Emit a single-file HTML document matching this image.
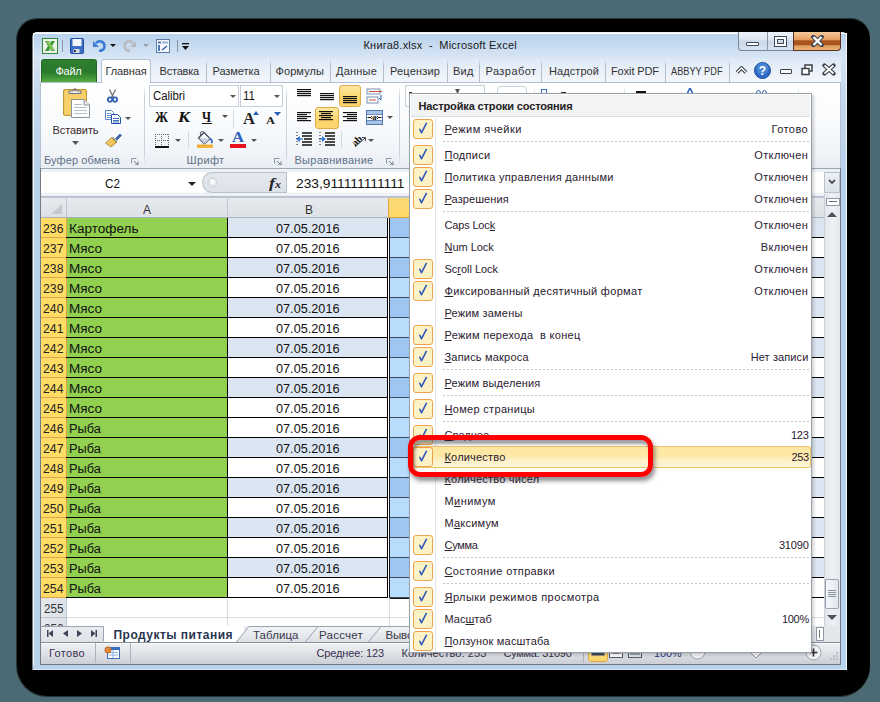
<!DOCTYPE html>
<html><head><meta charset="utf-8"><style>*{margin:0;padding:0;box-sizing:border-box}
html,body{width:880px;height:702px;overflow:hidden;background:#4c6a73;font-family:"Liberation Sans",sans-serif;position:relative}
div{position:absolute}
.t{white-space:pre}
u{text-decoration:underline;text-underline-offset:1px}
</style></head><body>
<div style="left:17px;top:19px;width:853px;height:677px;background:#000;border-radius:20px 19px 30px 30px"></div>
<div style="left:16px;top:18px;width:854px;height:679px;border:1px solid rgba(0,0,0,0.5);border-right:none;border-radius:21px 19px 30px 31px"></div>
<div style="left:32px;top:32px;width:815px;height:638px;background:linear-gradient(#dce7f4,#d6e3f2 26px,#c4d8ee 60px,#b9d2eb 140px,#b9d3ec);border-radius:5px 5px 0 0;border-left:1px solid #767a82;border-top:1px solid #e9eff7"></div>
<div style="left:33px;top:33px;width:1px;height:636px;background:#f3f7fc"></div>
<div style="left:846px;top:33px;width:1px;height:637px;background:#f3f7fc"></div>
<div style="left:34px;top:33px;width:812px;height:1px;background:#fff"></div>
<div style="left:33px;top:669px;width:813px;height:1px;background:#d6e6f6"></div>
<div style="left:34px;top:34px;width:812px;height:24px;background:linear-gradient(#b9d2ed,#c6daf0 45%,#d8e6f5)"></div>
<div style="left:40px;top:58px;width:801px;height:24px;background:linear-gradient(#dce8f5,#e9f0f9 50%,#f4f7fb)"></div>
<svg style="position:absolute;left:42px;top:38px;" width="16" height="16" viewBox="0 0 16 16"><rect x="0.5" y="0.5" width="15" height="15" fill="#eef3ea" stroke="#2f8a3a"/>
<path d="M3 3 L7 3 L8 6 L9 3 L13 3 L10 8 L13 13 L9 13 L8 10 L7 13 L3 13 L6 8 Z" fill="#3d9a3a"/>
<path d="M4 3.5 L7 3.5 L12.5 12.5 L9.5 12.5 Z" fill="#8ed05a" opacity=".8"/></svg>
<div style="left:62px;top:40px;width:1px;height:12px;background:#8a96a6"></div>
<svg style="position:absolute;left:70px;top:38px;" width="14" height="16" viewBox="0 0 14 16"><rect x="0.5" y="0.5" width="13" height="15" rx="1" fill="#3a6fc4" stroke="#1f4fa0"/>
<rect x="2.5" y="1" width="9" height="7" fill="#f4f6fa"/>
<rect x="3.5" y="11" width="6" height="4" fill="#d8dde6"/><rect x="4" y="12" width="2" height="2" fill="#333"/></svg>
<svg style="position:absolute;left:92px;top:39px;" width="14" height="13" viewBox="0 0 14 13"><path d="M4 4 C7 1 12 2 12.5 6.5 C13 10 10 12 7 12" fill="none" stroke="#3b7bd4" stroke-width="2.6"/>
<path d="M1 2 L1 8 L7 8 Z" fill="#3b7bd4"/></svg>
<svg style="position:absolute;left:110px;top:44px;" width="6" height="3" viewBox="0 0 6 3"><path d="M0 0 L6 0 L3 3 Z" fill="#111"/></svg>
<svg style="position:absolute;left:123px;top:39px;" width="14" height="13" viewBox="0 0 14 13"><path d="M10 4 C7 1 2 2 1.5 6.5 C1 10 4 12 7 12" fill="none" stroke="#b8bcc2" stroke-width="2.6"/>
<path d="M13 2 L13 8 L7 8 Z" fill="#b8bcc2"/></svg>
<svg style="position:absolute;left:143px;top:44px;" width="6" height="3" viewBox="0 0 6 3"><path d="M0 0 L6 0 L3 3 Z" fill="#9aa0a8"/></svg>
<svg style="position:absolute;left:156px;top:39px;" width="14" height="14" viewBox="0 0 14 14"><rect x="0.5" y="0.5" width="13" height="13" fill="#f6f9fd" stroke="#5a7aa8"/>
<rect x="2" y="2.5" width="3" height="2" fill="#4c78b8"/><rect x="6" y="2.5" width="6" height="2" fill="#9cb4d6"/>
<rect x="2" y="6" width="2" height="6" fill="#4c78b8"/><path d="M6 11 L11 7" stroke="#2a55a0" stroke-width="1.3"/></svg>
<div style="left:177px;top:40px;width:1px;height:12px;background:#8a96a6"></div>
<svg style="position:absolute;left:182px;top:43px;" width="7" height="7" viewBox="0 0 7 7"><rect x="0" y="0" width="7" height="1.3" fill="#111"/><path d="M0 3 L7 3 L3.5 7 Z" fill="#111"/></svg>
<div class="t" style="left:363.50px;top:39.00px;font-size:11px;line-height:normal;color:#1a1a1a;font-weight:normal;font-family:'Liberation Sans',sans-serif;letter-spacing:0.207px;">Книга8.xlsx  -  Microsoft Excel</div>
<div style="left:738px;top:32px;width:29px;height:19px;background:linear-gradient(#eef3f9,#dbe5f0 45%,#c9d6e6 50%,#d8e4f1);border:1px solid #7b8797;border-top:none;border-right:none;border-radius:0 0 0 4px"></div>
<div style="left:752px;top:42px;width:14px;height:1px;display:none"></div>
<div style="left:746px;top:42px;width:13px;height:4px;background:#fff;border:1px solid #3c4a5c;border-radius:1px"></div>
<div style="left:767px;top:32px;width:27px;height:19px;background:linear-gradient(#eef3f9,#dbe5f0 45%,#c9d6e6 50%,#d8e4f1);border-bottom:1px solid #7b8797;border-left:1px solid #8c98a8"></div>
<div style="left:775px;top:37px;width:11px;height:9px;border:2px solid #fff;outline:1px solid #3c4a5c;background:transparent"></div>
<div style="left:777px;top:39px;width:7px;height:5px;border:1px solid #3c4a5c"></div>
<div style="left:793px;top:32px;width:48px;height:19px;background:linear-gradient(#f3c89c,#eeb47e 22%,#e79c5c 45%,#a9541f 48%,#a9541f 70%,#dc9a58 76%,#ecb478);border:1px solid #5e3020;border-top:none;border-radius:0 0 4px 0"></div>
<svg style="position:absolute;left:811px;top:35px;" width="13" height="12" viewBox="0 0 13 12"><path d="M2.5 2 L10.5 10 M10.5 2 L2.5 10" stroke="#3d4350" stroke-width="4.4" stroke-linecap="square"/><path d="M2.5 2 L10.5 10 M10.5 2 L2.5 10" stroke="#fff" stroke-width="2.4"/></svg>
<div style="left:41px;top:59px;width:56px;height:23px;background:linear-gradient(#2f7d2f,#2a7a2c 55%,#3f9436 80%,#5aae44);border:1px solid #246a26;border-bottom:none;border-radius:3px 3px 0 0"></div>
<div class="t" style="left:55.50px;top:64.50px;font-size:11px;line-height:normal;color:#fff;font-weight:normal;font-family:'Liberation Sans',sans-serif;letter-spacing:-0.262px;">Файл</div>
<div style="left:101px;top:59px;width:50px;height:24px;background:linear-gradient(#fff,#fbfcfe);border:1px solid #b6c3d3;border-bottom:none;border-radius:3px 3px 0 0"></div>
<div class="t" style="left:105.50px;top:65.00px;font-size:11px;line-height:normal;color:#333;font-weight:normal;font-family:'Liberation Sans',sans-serif;letter-spacing:-0.125px;">Главная</div>
<div class="t" style="left:159.50px;top:65.00px;font-size:11px;line-height:normal;color:#333;font-weight:normal;font-family:'Liberation Sans',sans-serif;letter-spacing:-0.199px;">Вставка</div>
<div class="t" style="left:212.50px;top:65.00px;font-size:11px;line-height:normal;color:#333;font-weight:normal;font-family:'Liberation Sans',sans-serif;letter-spacing:-0.068px;">Разметка</div>
<div class="t" style="left:275.50px;top:65.00px;font-size:11px;line-height:normal;color:#333;font-weight:normal;font-family:'Liberation Sans',sans-serif;letter-spacing:0.089px;">Формулы</div>
<div class="t" style="left:336.00px;top:65.00px;font-size:11px;line-height:normal;color:#333;font-weight:normal;font-family:'Liberation Sans',sans-serif;letter-spacing:0.208px;">Данные</div>
<div class="t" style="left:390.00px;top:65.00px;font-size:11px;line-height:normal;color:#333;font-weight:normal;font-family:'Liberation Sans',sans-serif;letter-spacing:0.168px;">Рецензир</div>
<div class="t" style="left:453.00px;top:65.00px;font-size:11px;line-height:normal;color:#333;font-weight:normal;font-family:'Liberation Sans',sans-serif;letter-spacing:0.198px;">Вид</div>
<div class="t" style="left:485.50px;top:65.00px;font-size:11px;line-height:normal;color:#333;font-weight:normal;font-family:'Liberation Sans',sans-serif;letter-spacing:0.441px;">Разработ</div>
<div class="t" style="left:549.00px;top:65.00px;font-size:11px;line-height:normal;color:#333;font-weight:normal;font-family:'Liberation Sans',sans-serif;letter-spacing:0.074px;">Надстрой</div>
<div class="t" style="left:611.00px;top:65.00px;font-size:11px;line-height:normal;color:#333;font-weight:normal;font-family:'Liberation Sans',sans-serif;letter-spacing:-0.101px;">Foxit PDF</div>
<div class="t" style="left:671.00px;top:65.00px;font-size:11px;line-height:normal;color:#333;font-weight:normal;font-family:'Liberation Sans',sans-serif;transform:scaleX(0.8368);transform-origin:0 0;">ABBYY PDF</div>
<div style="left:205.5px;top:60px;width:1px;height:22px;background:linear-gradient(rgba(176,186,198,0.2),#b3bcc8 25%,#b3bcc8)"></div>
<div style="left:270px;top:60px;width:1px;height:22px;background:linear-gradient(rgba(176,186,198,0.2),#b3bcc8 25%,#b3bcc8)"></div>
<div style="left:330px;top:60px;width:1px;height:22px;background:linear-gradient(rgba(176,186,198,0.2),#b3bcc8 25%,#b3bcc8)"></div>
<div style="left:383px;top:60px;width:1px;height:22px;background:linear-gradient(rgba(176,186,198,0.2),#b3bcc8 25%,#b3bcc8)"></div>
<div style="left:446.5px;top:60px;width:1px;height:22px;background:linear-gradient(rgba(176,186,198,0.2),#b3bcc8 25%,#b3bcc8)"></div>
<div style="left:478.5px;top:60px;width:1px;height:22px;background:linear-gradient(rgba(176,186,198,0.2),#b3bcc8 25%,#b3bcc8)"></div>
<div style="left:541px;top:60px;width:1px;height:22px;background:linear-gradient(rgba(176,186,198,0.2),#b3bcc8 25%,#b3bcc8)"></div>
<div style="left:605px;top:60px;width:1px;height:22px;background:linear-gradient(rgba(176,186,198,0.2),#b3bcc8 25%,#b3bcc8)"></div>
<div style="left:664.5px;top:60px;width:1px;height:22px;background:linear-gradient(rgba(176,186,198,0.2),#b3bcc8 25%,#b3bcc8)"></div>
<div style="left:728.5px;top:60px;width:1px;height:22px;background:linear-gradient(rgba(176,186,198,0.2),#b3bcc8 25%,#b3bcc8)"></div>
<svg style="position:absolute;left:735px;top:65px;" width="13" height="10" viewBox="0 0 13 10"><path d="M2 7.5 L6.5 3 L11 7.5" fill="none" stroke="#3a3f48" stroke-width="3.6" stroke-linejoin="round"/><path d="M2 7.5 L6.5 3 L11 7.5" fill="none" stroke="#fff" stroke-width="1.4"/></svg>
<svg style="position:absolute;left:754px;top:62px;" width="17" height="17" viewBox="0 0 17 17"><circle cx="8.5" cy="8.5" r="8" fill="#2f6bc4" stroke="#1f4f9a"/><circle cx="8.5" cy="6.5" r="6" fill="#5a92de" opacity=".6"/><text x="8.5" y="13" font-family="Liberation Sans" font-weight="bold" font-size="12" fill="#fff" text-anchor="middle">?</text></svg>
<div style="left:780px;top:69px;width:12px;height:5px;background:#fff;border:1.5px solid #3a3f48;border-radius:1px"></div>
<svg style="position:absolute;left:801px;top:64px;" width="12" height="12" viewBox="0 0 12 12"><rect x="4" y="1" width="7" height="6" fill="#fff" stroke="#3a3f48" stroke-width="1.5"/><rect x="1" y="4.5" width="7" height="6" fill="#fff" stroke="#3a3f48" stroke-width="1.5"/></svg>
<svg style="position:absolute;left:822px;top:63px;" width="14" height="13" viewBox="0 0 14 13"><path d="M2.5 2.5 L11.5 10.5 M11.5 2.5 L2.5 10.5" stroke="#3a3f48" stroke-width="4.2" stroke-linecap="round"/><path d="M2.5 2.5 L11.5 10.5 M11.5 2.5 L2.5 10.5" stroke="#fff" stroke-width="1.8"/></svg>
<div style="left:40px;top:82px;width:801px;height:87px;background:linear-gradient(#ffffff,#f9fbfd 45%,#f1f4f8 80%,#e9eef4);border:1px solid #b6c3d3;border-top-color:#b0bfd1"></div>
<div style="left:102px;top:82px;width:48px;height:1px;background:#fff"></div>
<div style="left:144px;top:85px;width:1px;height:81px;background:linear-gradient(rgba(200,210,222,0),#c9d3df 15%,#c9d3df 85%,rgba(200,210,222,0))"></div>
<div style="left:286px;top:85px;width:1px;height:81px;background:linear-gradient(rgba(200,210,222,0),#c9d3df 15%,#c9d3df 85%,rgba(200,210,222,0))"></div>
<div style="left:399px;top:85px;width:1px;height:81px;background:linear-gradient(rgba(200,210,222,0),#c9d3df 15%,#c9d3df 85%,rgba(200,210,222,0))"></div>
<div style="left:534px;top:85px;width:1px;height:81px;background:linear-gradient(rgba(200,210,222,0),#c9d3df 15%,#c9d3df 85%,rgba(200,210,222,0))"></div>
<div style="left:624px;top:85px;width:1px;height:81px;background:linear-gradient(rgba(200,210,222,0),#c9d3df 15%,#c9d3df 85%,rgba(200,210,222,0))"></div>
<div style="left:798px;top:85px;width:1px;height:81px;background:linear-gradient(rgba(200,210,222,0),#c9d3df 15%,#c9d3df 85%,rgba(200,210,222,0))"></div>
<div class="t" style="left:44.00px;top:154.00px;font-size:11px;line-height:normal;color:#5f7088;font-weight:normal;font-family:'Liberation Sans',sans-serif;letter-spacing:0.104px;">Буфер обмена</div>
<div class="t" style="left:186.50px;top:154.00px;font-size:11px;line-height:normal;color:#5f7088;font-weight:normal;font-family:'Liberation Sans',sans-serif;letter-spacing:0.359px;">Шрифт</div>
<div class="t" style="left:294.50px;top:154.00px;font-size:11px;line-height:normal;color:#5f7088;font-weight:normal;font-family:'Liberation Sans',sans-serif;letter-spacing:0.273px;">Выравнивание</div>
<svg style="position:absolute;left:131px;top:158px;" width="8" height="7" viewBox="0 0 8 7"><path d="M0.5 0.5 H5.5 M0.5 0.5 V5.5" stroke="#8a96a6" fill="none"/><path d="M3 3 L7 7 M7 3.5 V7 H3.5" stroke="#6a7686" fill="none"/></svg>
<svg style="position:absolute;left:274px;top:158px;" width="8" height="7" viewBox="0 0 8 7"><path d="M0.5 0.5 H5.5 M0.5 0.5 V5.5" stroke="#8a96a6" fill="none"/><path d="M3 3 L7 7 M7 3.5 V7 H3.5" stroke="#6a7686" fill="none"/></svg>
<svg style="position:absolute;left:386px;top:158px;" width="8" height="7" viewBox="0 0 8 7"><path d="M0.5 0.5 H5.5 M0.5 0.5 V5.5" stroke="#8a96a6" fill="none"/><path d="M3 3 L7 7 M7 3.5 V7 H3.5" stroke="#6a7686" fill="none"/></svg>
<svg style="position:absolute;left:62px;top:87px;" width="29" height="32" viewBox="0 0 29 32"><rect x="1.5" y="2.5" width="23" height="26" rx="1.5" fill="#f5c95e" stroke="#b89a3a"/>
<rect x="3" y="4" width="20" height="23" fill="#f7d06a"/>
<path d="M7 6.5 H19 V4 H15 C15 1 11 1 11 4 H7 Z" fill="#e9ecef" stroke="#6f747a"/>
<circle cx="13" cy="3" r="0.9" fill="#a03020"/>
<path d="M9.5 12.5 H22 L27.5 18 V30.5 H9.5 Z" fill="#fff" stroke="#8a929c"/>
<path d="M22 12.5 V18 H27.5" fill="#e6e9ee" stroke="#8a929c"/>
<path d="M12 17.5 H20 M12 20.5 H25 M12 23.5 H25 M12 26.5 H25" stroke="#b8bec6"/></svg>
<div class="t" style="left:52.50px;top:123.70px;font-size:11px;line-height:normal;color:#3a2a2a;font-weight:normal;font-family:'Liberation Sans',sans-serif;letter-spacing:-0.080px;">Вставить</div>
<svg style="position:absolute;left:72px;top:141px;" width="7" height="4" viewBox="0 0 7 4"><path d="M0 0 H7 L3.5 4 Z" fill="#555"/></svg>
<svg style="position:absolute;left:107px;top:89px;" width="11" height="14" viewBox="0 0 11 14"><path d="M2.5 0.5 L6.5 8.5 M8.5 0.5 L4.5 8.5" stroke="#6a6f78" stroke-width="1.3"/><circle cx="3" cy="10.6" r="2.2" fill="none" stroke="#2a5cb5" stroke-width="1.7"/><circle cx="8" cy="10.6" r="2.2" fill="none" stroke="#2a5cb5" stroke-width="1.7"/></svg>
<svg style="position:absolute;left:104px;top:110px;" width="17" height="14" viewBox="0 0 17 14"><path d="M1.5 0.5 H7.5 L9.5 2.5 V9.5 H1.5 Z" fill="#fff" stroke="#5a86c8"/><path d="M3 3.5 H7 M3 5.5 H7 M3 7.5 H7" stroke="#6a98d8"/><path d="M7.5 4.5 H13.5 L16.5 7.5 V13.5 H7.5 Z" fill="#fff" stroke="#2453a8"/><path d="M9 8.5 H15 M9 10.5 H15 M9 12 H15" stroke="#3a6cc0"/></svg>
<svg style="position:absolute;left:125px;top:117px;" width="6" height="3" viewBox="0 0 6 3"><path d="M0 0 H6 L3 3 Z" fill="#555"/></svg>
<svg style="position:absolute;left:105px;top:132px;" width="17" height="15" viewBox="0 0 17 15"><path d="M10.5 6.5 L15 2 L16.5 3.5 L12 8 Z" fill="#3f6ab0" stroke="#2a4a80" stroke-width=".7"/><path d="M8 5 L12.5 9.5 L11 11 L6.5 6.5 Z" fill="#8c929a"/><path d="M0.5 11 L6.5 5.5 L11.5 10.5 L6 15 Z" fill="#ecc04e" stroke="#9b7a28" stroke-width=".7"/><path d="M2 11.5 L6.5 7.5 M4 13 L8 9.5" stroke="#f8e4a0" stroke-width=".8"/></svg>
<div style="left:149px;top:85px;width:90px;height:22px;background:#fff;border:1px solid #c5cfdc"></div>
<div style="left:240px;top:85px;width:43px;height:22px;background:#fff;border:1px solid #c5cfdc"></div>
<div class="t" style="left:152.50px;top:88.70px;font-size:12px;line-height:normal;color:#111;font-weight:normal;font-family:'Liberation Sans',sans-serif;transform:scaleX(0.9407);transform-origin:0 0;">Calibri</div>
<div class="t" style="left:242.50px;top:88.70px;font-size:12px;line-height:normal;color:#111;font-weight:normal;font-family:'Liberation Sans',sans-serif;transform:scaleX(0.9624);transform-origin:0 0;">11</div>
<svg style="position:absolute;left:230px;top:95px;" width="6" height="3" viewBox="0 0 6 3"><path d="M0 0 H6 L3 3 Z" fill="#555"/></svg>
<svg style="position:absolute;left:274px;top:95px;" width="6" height="3" viewBox="0 0 6 3"><path d="M0 0 H6 L3 3 Z" fill="#555"/></svg>
<div class="t" style="left:154.50px;top:110.00px;font-size:14px;line-height:normal;color:#111;font-weight:bold;font-family:'Liberation Serif',serif;transform:scaleX(0.9391);transform-origin:0 0;">Ж</div>
<div class="t" style="left:177.50px;top:110.00px;font-size:14px;line-height:normal;color:#111;font-weight:bold;font-family:'Liberation Serif',serif;font-style:italic;transform:scaleX(1.2632);transform-origin:0 0;">К</div>
<div class="t" style="left:202.00px;top:110.00px;font-size:14px;line-height:normal;color:#111;font-weight:bold;font-family:'Liberation Serif',serif;transform:scaleX(0.8754);transform-origin:0 0;">Ч</div>
<div style="left:202px;top:123px;width:10px;height:1px;background:#111"></div>
<svg style="position:absolute;left:222px;top:115px;" width="6" height="3" viewBox="0 0 6 3"><path d="M0 0 H6 L3 3 Z" fill="#555"/></svg>
<div style="left:233px;top:110px;width:1px;height:18px;background:#d3dae3"></div>
<div class="t" style="left:243.00px;top:109.00px;font-size:17px;line-height:normal;color:#222;font-weight:bold;font-family:'Liberation Serif',serif;transform:scaleX(0.9771);transform-origin:0 0;">A</div>
<svg style="position:absolute;left:253px;top:111px;" width="6" height="4" viewBox="0 0 6 4"><path d="M0 4 L3 0 L6 4 Z" fill="#2b5fb8"/></svg>
<div class="t" style="left:266.00px;top:114.00px;font-size:11px;line-height:normal;color:#222;font-weight:bold;font-family:'Liberation Serif',serif;transform:scaleX(1.1316);transform-origin:0 0;">A</div>
<svg style="position:absolute;left:274px;top:112px;" width="7" height="4" viewBox="0 0 7 4"><path d="M0 0 H7 L3.5 4 Z" fill="#2b5fb8"/></svg>
<svg style="position:absolute;left:155px;top:134px;" width="14" height="14" viewBox="0 0 14 14"><g fill="#666"><rect x="0" y="0" width="1" height="1"/><rect x="0" y="6" width="1" height="1"/><rect x="0" y="0" width="1" height="1"/><rect x="6" y="0" width="1" height="1"/><rect x="13" y="0" width="1" height="1"/><rect x="2" y="0" width="1" height="1"/><rect x="2" y="6" width="1" height="1"/><rect x="0" y="2" width="1" height="1"/><rect x="6" y="2" width="1" height="1"/><rect x="13" y="2" width="1" height="1"/><rect x="4" y="0" width="1" height="1"/><rect x="4" y="6" width="1" height="1"/><rect x="0" y="4" width="1" height="1"/><rect x="6" y="4" width="1" height="1"/><rect x="13" y="4" width="1" height="1"/><rect x="6" y="0" width="1" height="1"/><rect x="6" y="6" width="1" height="1"/><rect x="0" y="6" width="1" height="1"/><rect x="6" y="6" width="1" height="1"/><rect x="13" y="6" width="1" height="1"/><rect x="8" y="0" width="1" height="1"/><rect x="8" y="6" width="1" height="1"/><rect x="0" y="8" width="1" height="1"/><rect x="6" y="8" width="1" height="1"/><rect x="13" y="8" width="1" height="1"/><rect x="10" y="0" width="1" height="1"/><rect x="10" y="6" width="1" height="1"/><rect x="0" y="10" width="1" height="1"/><rect x="6" y="10" width="1" height="1"/><rect x="13" y="10" width="1" height="1"/><rect x="12" y="0" width="1" height="1"/><rect x="12" y="6" width="1" height="1"/><rect x="0" y="12" width="1" height="1"/><rect x="6" y="12" width="1" height="1"/><rect x="13" y="12" width="1" height="1"/></g><rect x="0" y="12" width="14" height="2" fill="#111"/></svg>
<svg style="position:absolute;left:175px;top:139px;" width="6" height="3" viewBox="0 0 6 3"><path d="M0 0 H6 L3 3 Z" fill="#555"/></svg>
<div style="left:188px;top:131px;width:1px;height:17px;background:#d3dae3"></div>
<svg style="position:absolute;left:196px;top:131px;" width="18" height="17" viewBox="0 0 18 17"><path d="M2.5 7 L8 1.5 L14 7.5 L8.5 13 Z" fill="#fdfdfd" stroke="#2f3a4c" stroke-width="1.1"/><path d="M3 7 L14 7.5 L8.5 13 Z" fill="#c9d3df"/><path d="M5 4.5 C3 1 6 -0.5 8 1.5" stroke="#2f3a4c" fill="none"/><path d="M14 7.5 C16.5 9.5 16.5 11 15.3 12" stroke="#3a6cc8" stroke-width="1.8" fill="none"/><rect x="1" y="13.5" width="16" height="3.5" fill="#f3b63c"/><path d="M1 14.5 H17" stroke="#e89a20" stroke-dasharray="1 1"/></svg>
<svg style="position:absolute;left:218px;top:139px;" width="6" height="3" viewBox="0 0 6 3"><path d="M0 0 H6 L3 3 Z" fill="#555"/></svg>
<div class="t" style="left:232.00px;top:129.00px;font-size:15px;line-height:normal;color:#2b5fb8;font-weight:bold;font-family:'Liberation Serif',serif;transform:scaleX(1.1066);transform-origin:0 0;">A</div>
<div style="left:230px;top:144px;width:16px;height:4px;background:#e8101c"></div>
<svg style="position:absolute;left:251px;top:139px;" width="6" height="3" viewBox="0 0 6 3"><path d="M0 0 H6 L3 3 Z" fill="#555"/></svg>
<svg style="position:absolute;left:297px;top:89px;" width="16" height="9" viewBox="0 0 16 9"><rect x="0" y="0" width="14" height="1.2" fill="#111"/><rect x="0" y="2" width="14" height="1.2" fill="#111"/><rect x="0" y="4" width="14" height="1.2" fill="#111"/><rect x="0" y="6" width="14" height="1.2" fill="#111"/></svg>
<svg style="position:absolute;left:320px;top:93px;" width="16" height="9" viewBox="0 0 16 9"><rect x="0" y="0" width="14" height="1.2" fill="#111"/><rect x="0" y="2" width="14" height="1.2" fill="#111"/><rect x="0" y="4" width="14" height="1.2" fill="#111"/><rect x="0" y="6" width="14" height="1.2" fill="#111"/></svg>
<div style="left:339px;top:85px;width:22px;height:22px;background:linear-gradient(#fde9a0,#fbd46a 60%,#fdd66f);border:1px solid #e2a947;border-radius:3px"></div>
<svg style="position:absolute;left:343px;top:96px;" width="16" height="9" viewBox="0 0 16 9"><rect x="0" y="0" width="14" height="1.2" fill="#111"/><rect x="0" y="2" width="14" height="1.2" fill="#111"/><rect x="0" y="4" width="14" height="1.2" fill="#111"/><rect x="0" y="6" width="14" height="1.2" fill="#111"/></svg>
<svg style="position:absolute;left:366px;top:88px;" width="17" height="16" viewBox="0 0 17 16"><rect x="1" y="1" width="13" height="5" fill="#fff" stroke="#7890b0"/><path d="M3 3.5 H16" stroke="#c05030"/><rect x="1" y="9" width="11" height="6" fill="#fff" stroke="#7890b0"/><path d="M3 12 H10" stroke="#c05030"/><path d="M15 7 V12 L13 10" stroke="#2b5fb8" fill="none"/></svg>
<svg style="position:absolute;left:297px;top:112px;" width="16" height="11" viewBox="0 0 16 11"><rect x="0" y="0" width="14" height="1.2" fill="#111"/><rect x="0" y="2" width="10" height="1.2" fill="#111"/><rect x="0" y="4" width="14" height="1.2" fill="#111"/><rect x="0" y="6" width="10" height="1.2" fill="#111"/><rect x="0" y="8" width="14" height="1.2" fill="#111"/></svg>
<div style="left:315px;top:107px;width:24px;height:22px;background:linear-gradient(#fde9a0,#fbd46a 60%,#fdd66f);border:1px solid #e2a947;border-radius:3px"></div>
<svg style="position:absolute;left:319px;top:111px;" width="16" height="11" viewBox="0 0 16 11"><rect x="0" y="0" width="14" height="1.2" fill="#111"/><rect x="2" y="2" width="10" height="1.2" fill="#111"/><rect x="0" y="4" width="14" height="1.2" fill="#111"/><rect x="2" y="6" width="10" height="1.2" fill="#111"/><rect x="0" y="8" width="14" height="1.2" fill="#111"/></svg>
<svg style="position:absolute;left:343px;top:112px;" width="16" height="11" viewBox="0 0 16 11"><rect x="0" y="0" width="14" height="1.2" fill="#111"/><rect x="4" y="2" width="10" height="1.2" fill="#111"/><rect x="0" y="4" width="14" height="1.2" fill="#111"/><rect x="4" y="6" width="10" height="1.2" fill="#111"/><rect x="0" y="8" width="14" height="1.2" fill="#111"/></svg>
<svg style="position:absolute;left:366px;top:110px;" width="17" height="15" viewBox="0 0 17 15"><rect x="0.5" y="0.5" width="16" height="14" fill="#a9c2e6" stroke="#4f78b0"/><rect x="1" y="4" width="15" height="7" fill="#fff"/><path d="M1 4.5 H16 M1 10.5 H16" stroke="#6a8cc0"/><text x="8.5" y="10" font-family="Liberation Serif" font-weight="bold" font-size="8" text-anchor="middle" fill="#111">a</text><path d="M1.5 7.5 H5 M12 7.5 H15.5" stroke="#111"/><path d="M5 6 L6.5 7.5 L5 9 M12 6 L10.5 7.5 L12 9" stroke="#111" fill="none" stroke-width=".8"/></svg>
<svg style="position:absolute;left:387px;top:116px;" width="6" height="3" viewBox="0 0 6 3"><path d="M0 0 H6 L3 3 Z" fill="#555"/></svg>
<svg style="position:absolute;left:295px;top:131px;" width="18" height="16" viewBox="0 0 18 16"><path d="M7 2 H17 M7 5 H17 M9 8 H17 M7 11 H17 M7 14 H17" stroke="#111" stroke-width="1.4"/><path d="M1 8 L5 5 V11 Z" fill="#3a7bd5"/><path d="M5 8 H8" stroke="#3a7bd5" stroke-width="1.4"/><path d="M2 1 V15" stroke="#111" stroke-dasharray="1 2"/></svg>
<svg style="position:absolute;left:318px;top:131px;" width="18" height="16" viewBox="0 0 18 16"><path d="M7 2 H17 M7 5 H17 M9 8 H17 M7 11 H17 M7 14 H17" stroke="#111" stroke-width="1.4"/><path d="M8 8 L4 5 V11 Z" fill="#3a7bd5"/><path d="M1 8 H5" stroke="#3a7bd5" stroke-width="1.4"/><path d="M2 1 V15" stroke="#111" stroke-dasharray="1 2"/></svg>
<div style="left:341px;top:131px;width:1px;height:17px;background:#d3dae3"></div>
<svg style="position:absolute;left:350px;top:132px;" width="18" height="16" viewBox="0 0 18 16"><g transform="rotate(-45 8 8)"><text x="1.5" y="11" font-family="Liberation Serif" font-weight="bold" font-size="10" fill="#111">ab</text></g><path d="M5 15 L15 6" stroke="#444" stroke-width="1"/><path d="M12 5.5 L15.5 5.5 L15.5 9" stroke="#444" fill="none"/></svg>
<svg style="position:absolute;left:368px;top:139px;" width="6" height="3" viewBox="0 0 6 3"><path d="M0 0 H6 L3 3 Z" fill="#555"/></svg>
<div style="left:405px;top:85px;width:80px;height:22px;background:#fff;border:1px solid #c5cfdc"></div>
<div style="left:409px;top:92px;width:3px;height:2px;background:#333"></div>
<div style="left:455px;top:89px;width:5px;height:4px;background:#555;clip-path:polygon(0 0,100% 0,60% 100%,40% 100%)"></div>
<div style="left:497px;top:86px;width:30px;height:12px;background:#fff;border:1px solid #c8d2de;border-radius:4px"></div>
<div style="left:541px;top:89px;width:6px;height:5px;background:#fff;border:1px solid #3a6fc4"></div>
<div style="left:561px;top:92px;width:5px;height:2px;background:#333"></div>
<div style="left:636px;top:91px;width:10px;height:2px;background:#111"></div>
<svg style="position:absolute;left:687px;top:88px;" width="6" height="6" viewBox="0 0 6 6"><path d="M0 6 L3 0 L6 6" stroke="#2b5fb8" stroke-width="1.5" fill="none"/></svg>
<svg style="position:absolute;left:756px;top:90px;" width="11" height="4" viewBox="0 0 11 4"><ellipse cx="2.5" cy="3" rx="2" ry="2.5" fill="none" stroke="#2b5fb8"/><ellipse cx="8.5" cy="3" rx="2" ry="2.5" fill="none" stroke="#2b5fb8"/></svg>
<div style="left:40px;top:169px;width:801px;height:29px;background:linear-gradient(#eef1f5,#e6eaf0)"></div>
<div style="left:40px;top:168px;width:801px;height:1px;background:#9aa8b8"></div>
<div style="left:41px;top:172px;width:165px;height:21px;background:#fff"></div>
<div class="t" style="left:105.00px;top:177.20px;font-size:12.5px;line-height:normal;color:#111;font-weight:normal;font-family:'Liberation Sans',sans-serif;transform:scaleX(0.9384);transform-origin:0 0;">C2</div>
<svg style="position:absolute;left:188px;top:182px;" width="8" height="4" viewBox="0 0 8 4"><path d="M0 0 H8 L4 4 Z" fill="#222"/></svg>
<div style="left:202px;top:172px;width:100px;height:21px;background:linear-gradient(#e4e8ee,#dde2e9);border:1px solid #b9c2cd;border-right:none;border-radius:11px 0 0 11px"></div>
<svg style="position:absolute;left:207px;top:177px;" width="11" height="11" viewBox="0 0 11 11"><circle cx="5.5" cy="5.5" r="4.5" fill="#e6e9ed" stroke="#c8cdd4"/><circle cx="5.5" cy="4.5" r="2.5" fill="#fff" opacity=".7"/></svg>
<div class="t" style="left:268.50px;top:175.50px;font-size:14px;line-height:normal;color:#222;font-weight:bold;font-family:'Liberation Serif',serif;font-style:italic;transform:scaleX(1.2843);transform-origin:0 0;">f</div>
<div class="t" style="left:274.50px;top:178.50px;font-size:10px;line-height:normal;color:#222;font-weight:bold;font-family:'Liberation Serif',serif;font-style:italic;transform:scaleX(1.2000);transform-origin:0 0;">x</div>
<div style="left:286px;top:172px;width:538px;height:21px;background:#fff;border-left:1px solid #b9c2cd"></div>
<div class="t" style="left:295.50px;top:177.20px;font-size:12.5px;line-height:normal;color:#111;font-weight:normal;font-family:'Liberation Sans',sans-serif;transform:scaleX(1.1017);transform-origin:0 0;">233,911111111111</div>
<div style="left:824px;top:172px;width:16px;height:21px;background:linear-gradient(#eef1f5,#dde3ea);border:1px solid #b9c2cd"></div>
<svg style="position:absolute;left:828px;top:179px;" width="8" height="6" viewBox="0 0 8 6"><path d="M1 1 L4 4 L7 1" stroke="#4a5260" stroke-width="1.8" fill="none"/></svg>
<div style="left:40px;top:194px;width:801px;height:1px;background:#f7f9fb"></div>
<div style="left:40px;top:196px;width:801px;height:2px;background:#bcc6d2"></div>
<div style="left:41px;top:198px;width:783px;height:428px;background:#fff"></div>
<div style="left:41px;top:198px;width:783px;height:19px;background:linear-gradient(#e7eaee,#dde1e6)"></div>
<div style="left:41px;top:217px;width:783px;height:1px;background:#a9b3c0"></div>
<svg style="position:absolute;left:51px;top:204px;" width="11" height="10" viewBox="0 0 11 10"><path d="M11 0 V10 H0 Z" fill="#c4c9d0"/></svg>
<div style="left:66px;top:198px;width:1px;height:19px;background:#c0c6ce"></div>
<div style="left:227px;top:198px;width:1px;height:19px;background:#c0c6ce"></div>
<div class="t" style="left:143.00px;top:203.00px;font-size:12.5px;line-height:normal;color:#333;font-weight:normal;font-family:'Liberation Sans',sans-serif;transform:scaleX(0.9588);transform-origin:0 0;">A</div>
<div class="t" style="left:304.50px;top:203.00px;font-size:12.5px;line-height:normal;color:#333;font-weight:normal;font-family:'Liberation Sans',sans-serif;transform:scaleX(0.9588);transform-origin:0 0;">B</div>
<div style="left:388px;top:198px;width:22px;height:19px;background:linear-gradient(#fbd978,#ffda68);border-left:1px solid #e3a548"></div>
<div style="left:388px;top:217px;width:22px;height:1px;background:#e0a040"></div>
<div style="left:41px;top:218px;width:25px;height:379px;background:#ffdc64"></div>
<div style="left:66px;top:218px;width:1px;height:379px;background:#e0a548"></div>
<div style="left:41px;top:597px;width:25px;height:29px;background:linear-gradient(90deg,#e4e8ed,#dde2e8)"></div>
<div style="left:66px;top:597px;width:1px;height:29px;background:#c0c6ce"></div>
<div style="left:228px;top:218px;width:160px;height:19px;background:#dce6f2"></div>
<div style="left:390px;top:218px;width:20px;height:19px;background:#9dc6f1"></div>
<div style="left:811px;top:218px;width:13px;height:19px;background:#dce6f2"></div>
<div style="left:41px;top:237px;width:25px;height:1px;background:#e0a548"></div>
<div style="left:66px;top:237px;width:322px;height:1px;background:#000"></div>
<div style="left:811px;top:237px;width:13px;height:1px;background:#000"></div>
<div style="left:389px;top:237px;width:21px;height:1px;background:#3c4a60"></div>
<div class="t" style="left:43.00px;top:221.50px;font-size:12.5px;line-height:normal;color:#222;font-weight:normal;font-family:'Liberation Sans',sans-serif;transform:scaleX(0.9828);transform-origin:0 0;">236</div>
<div class="t" style="left:276.25px;top:221.50px;font-size:12.5px;line-height:normal;color:#111;font-weight:normal;font-family:'Liberation Sans',sans-serif;transform:scaleX(1.0150);transform-origin:0 0;">07.05.2016</div>
<div style="left:228px;top:238px;width:160px;height:19px;background:#fff"></div>
<div style="left:390px;top:238px;width:20px;height:19px;background:#b8dcfb"></div>
<div style="left:811px;top:238px;width:13px;height:19px;background:#fff"></div>
<div style="left:41px;top:257px;width:25px;height:1px;background:#e0a548"></div>
<div style="left:66px;top:257px;width:322px;height:1px;background:#000"></div>
<div style="left:811px;top:257px;width:13px;height:1px;background:#000"></div>
<div style="left:389px;top:257px;width:21px;height:1px;background:#3c4a60"></div>
<div class="t" style="left:43.00px;top:241.50px;font-size:12.5px;line-height:normal;color:#222;font-weight:normal;font-family:'Liberation Sans',sans-serif;transform:scaleX(0.9828);transform-origin:0 0;">237</div>
<div class="t" style="left:276.25px;top:241.50px;font-size:12.5px;line-height:normal;color:#111;font-weight:normal;font-family:'Liberation Sans',sans-serif;transform:scaleX(1.0150);transform-origin:0 0;">07.05.2016</div>
<div style="left:228px;top:258px;width:160px;height:19px;background:#dce6f2"></div>
<div style="left:390px;top:258px;width:20px;height:19px;background:#9dc6f1"></div>
<div style="left:811px;top:258px;width:13px;height:19px;background:#dce6f2"></div>
<div style="left:41px;top:277px;width:25px;height:1px;background:#e0a548"></div>
<div style="left:66px;top:277px;width:322px;height:1px;background:#000"></div>
<div style="left:811px;top:277px;width:13px;height:1px;background:#000"></div>
<div style="left:389px;top:277px;width:21px;height:1px;background:#3c4a60"></div>
<div class="t" style="left:43.00px;top:261.50px;font-size:12.5px;line-height:normal;color:#222;font-weight:normal;font-family:'Liberation Sans',sans-serif;transform:scaleX(0.9828);transform-origin:0 0;">238</div>
<div class="t" style="left:276.25px;top:261.50px;font-size:12.5px;line-height:normal;color:#111;font-weight:normal;font-family:'Liberation Sans',sans-serif;transform:scaleX(1.0150);transform-origin:0 0;">07.05.2016</div>
<div style="left:228px;top:278px;width:160px;height:19px;background:#fff"></div>
<div style="left:390px;top:278px;width:20px;height:19px;background:#b8dcfb"></div>
<div style="left:811px;top:278px;width:13px;height:19px;background:#fff"></div>
<div style="left:41px;top:297px;width:25px;height:1px;background:#e0a548"></div>
<div style="left:66px;top:297px;width:322px;height:1px;background:#000"></div>
<div style="left:811px;top:297px;width:13px;height:1px;background:#000"></div>
<div style="left:389px;top:297px;width:21px;height:1px;background:#3c4a60"></div>
<div class="t" style="left:43.00px;top:281.50px;font-size:12.5px;line-height:normal;color:#222;font-weight:normal;font-family:'Liberation Sans',sans-serif;transform:scaleX(0.9828);transform-origin:0 0;">239</div>
<div class="t" style="left:276.25px;top:281.50px;font-size:12.5px;line-height:normal;color:#111;font-weight:normal;font-family:'Liberation Sans',sans-serif;transform:scaleX(1.0150);transform-origin:0 0;">07.05.2016</div>
<div style="left:228px;top:298px;width:160px;height:19px;background:#dce6f2"></div>
<div style="left:390px;top:298px;width:20px;height:19px;background:#9dc6f1"></div>
<div style="left:811px;top:298px;width:13px;height:19px;background:#dce6f2"></div>
<div style="left:41px;top:317px;width:25px;height:1px;background:#e0a548"></div>
<div style="left:66px;top:317px;width:322px;height:1px;background:#000"></div>
<div style="left:811px;top:317px;width:13px;height:1px;background:#000"></div>
<div style="left:389px;top:317px;width:21px;height:1px;background:#3c4a60"></div>
<div class="t" style="left:43.00px;top:301.50px;font-size:12.5px;line-height:normal;color:#222;font-weight:normal;font-family:'Liberation Sans',sans-serif;transform:scaleX(0.9828);transform-origin:0 0;">240</div>
<div class="t" style="left:276.25px;top:301.50px;font-size:12.5px;line-height:normal;color:#111;font-weight:normal;font-family:'Liberation Sans',sans-serif;transform:scaleX(1.0150);transform-origin:0 0;">07.05.2016</div>
<div style="left:228px;top:318px;width:160px;height:19px;background:#fff"></div>
<div style="left:390px;top:318px;width:20px;height:19px;background:#b8dcfb"></div>
<div style="left:811px;top:318px;width:13px;height:19px;background:#fff"></div>
<div style="left:41px;top:337px;width:25px;height:1px;background:#e0a548"></div>
<div style="left:66px;top:337px;width:322px;height:1px;background:#000"></div>
<div style="left:811px;top:337px;width:13px;height:1px;background:#000"></div>
<div style="left:389px;top:337px;width:21px;height:1px;background:#3c4a60"></div>
<div class="t" style="left:43.00px;top:321.50px;font-size:12.5px;line-height:normal;color:#222;font-weight:normal;font-family:'Liberation Sans',sans-serif;transform:scaleX(0.9828);transform-origin:0 0;">241</div>
<div class="t" style="left:276.25px;top:321.50px;font-size:12.5px;line-height:normal;color:#111;font-weight:normal;font-family:'Liberation Sans',sans-serif;transform:scaleX(1.0150);transform-origin:0 0;">07.05.2016</div>
<div style="left:228px;top:338px;width:160px;height:19px;background:#dce6f2"></div>
<div style="left:390px;top:338px;width:20px;height:19px;background:#9dc6f1"></div>
<div style="left:811px;top:338px;width:13px;height:19px;background:#dce6f2"></div>
<div style="left:41px;top:357px;width:25px;height:1px;background:#e0a548"></div>
<div style="left:66px;top:357px;width:322px;height:1px;background:#000"></div>
<div style="left:811px;top:357px;width:13px;height:1px;background:#000"></div>
<div style="left:389px;top:357px;width:21px;height:1px;background:#3c4a60"></div>
<div class="t" style="left:43.00px;top:341.50px;font-size:12.5px;line-height:normal;color:#222;font-weight:normal;font-family:'Liberation Sans',sans-serif;transform:scaleX(0.9828);transform-origin:0 0;">242</div>
<div class="t" style="left:276.25px;top:341.50px;font-size:12.5px;line-height:normal;color:#111;font-weight:normal;font-family:'Liberation Sans',sans-serif;transform:scaleX(1.0150);transform-origin:0 0;">07.05.2016</div>
<div style="left:228px;top:358px;width:160px;height:19px;background:#fff"></div>
<div style="left:390px;top:358px;width:20px;height:19px;background:#b8dcfb"></div>
<div style="left:811px;top:358px;width:13px;height:19px;background:#fff"></div>
<div style="left:41px;top:377px;width:25px;height:1px;background:#e0a548"></div>
<div style="left:66px;top:377px;width:322px;height:1px;background:#000"></div>
<div style="left:811px;top:377px;width:13px;height:1px;background:#000"></div>
<div style="left:389px;top:377px;width:21px;height:1px;background:#3c4a60"></div>
<div class="t" style="left:43.00px;top:361.50px;font-size:12.5px;line-height:normal;color:#222;font-weight:normal;font-family:'Liberation Sans',sans-serif;transform:scaleX(0.9828);transform-origin:0 0;">243</div>
<div class="t" style="left:276.25px;top:361.50px;font-size:12.5px;line-height:normal;color:#111;font-weight:normal;font-family:'Liberation Sans',sans-serif;transform:scaleX(1.0150);transform-origin:0 0;">07.05.2016</div>
<div style="left:228px;top:378px;width:160px;height:19px;background:#dce6f2"></div>
<div style="left:390px;top:378px;width:20px;height:19px;background:#9dc6f1"></div>
<div style="left:811px;top:378px;width:13px;height:19px;background:#dce6f2"></div>
<div style="left:41px;top:397px;width:25px;height:1px;background:#e0a548"></div>
<div style="left:66px;top:397px;width:322px;height:1px;background:#000"></div>
<div style="left:811px;top:397px;width:13px;height:1px;background:#000"></div>
<div style="left:389px;top:397px;width:21px;height:1px;background:#3c4a60"></div>
<div class="t" style="left:43.00px;top:381.50px;font-size:12.5px;line-height:normal;color:#222;font-weight:normal;font-family:'Liberation Sans',sans-serif;transform:scaleX(0.9828);transform-origin:0 0;">244</div>
<div class="t" style="left:276.25px;top:381.50px;font-size:12.5px;line-height:normal;color:#111;font-weight:normal;font-family:'Liberation Sans',sans-serif;transform:scaleX(1.0150);transform-origin:0 0;">07.05.2016</div>
<div style="left:228px;top:398px;width:160px;height:19px;background:#fff"></div>
<div style="left:390px;top:398px;width:20px;height:19px;background:#b8dcfb"></div>
<div style="left:811px;top:398px;width:13px;height:19px;background:#fff"></div>
<div style="left:41px;top:417px;width:25px;height:1px;background:#e0a548"></div>
<div style="left:66px;top:417px;width:322px;height:1px;background:#000"></div>
<div style="left:811px;top:417px;width:13px;height:1px;background:#000"></div>
<div style="left:389px;top:417px;width:21px;height:1px;background:#3c4a60"></div>
<div class="t" style="left:43.00px;top:401.50px;font-size:12.5px;line-height:normal;color:#222;font-weight:normal;font-family:'Liberation Sans',sans-serif;transform:scaleX(0.9828);transform-origin:0 0;">245</div>
<div class="t" style="left:276.25px;top:401.50px;font-size:12.5px;line-height:normal;color:#111;font-weight:normal;font-family:'Liberation Sans',sans-serif;transform:scaleX(1.0150);transform-origin:0 0;">07.05.2016</div>
<div style="left:228px;top:418px;width:160px;height:19px;background:#fff"></div>
<div style="left:390px;top:418px;width:20px;height:19px;background:#b8dcfb"></div>
<div style="left:811px;top:418px;width:13px;height:19px;background:#fff"></div>
<div style="left:41px;top:437px;width:25px;height:1px;background:#e0a548"></div>
<div style="left:66px;top:437px;width:322px;height:1px;background:#000"></div>
<div style="left:811px;top:437px;width:13px;height:1px;background:#000"></div>
<div style="left:389px;top:437px;width:21px;height:1px;background:#3c4a60"></div>
<div class="t" style="left:43.00px;top:421.50px;font-size:12.5px;line-height:normal;color:#222;font-weight:normal;font-family:'Liberation Sans',sans-serif;transform:scaleX(0.9828);transform-origin:0 0;">246</div>
<div class="t" style="left:276.25px;top:421.50px;font-size:12.5px;line-height:normal;color:#111;font-weight:normal;font-family:'Liberation Sans',sans-serif;transform:scaleX(1.0150);transform-origin:0 0;">07.05.2016</div>
<div style="left:228px;top:438px;width:160px;height:19px;background:#dce6f2"></div>
<div style="left:390px;top:438px;width:20px;height:19px;background:#9dc6f1"></div>
<div style="left:811px;top:438px;width:13px;height:19px;background:#dce6f2"></div>
<div style="left:41px;top:457px;width:25px;height:1px;background:#e0a548"></div>
<div style="left:66px;top:457px;width:322px;height:1px;background:#000"></div>
<div style="left:811px;top:457px;width:13px;height:1px;background:#000"></div>
<div style="left:389px;top:457px;width:21px;height:1px;background:#3c4a60"></div>
<div class="t" style="left:43.00px;top:441.50px;font-size:12.5px;line-height:normal;color:#222;font-weight:normal;font-family:'Liberation Sans',sans-serif;transform:scaleX(0.9828);transform-origin:0 0;">247</div>
<div class="t" style="left:276.25px;top:441.50px;font-size:12.5px;line-height:normal;color:#111;font-weight:normal;font-family:'Liberation Sans',sans-serif;transform:scaleX(1.0150);transform-origin:0 0;">07.05.2016</div>
<div style="left:228px;top:458px;width:160px;height:19px;background:#fff"></div>
<div style="left:390px;top:458px;width:20px;height:19px;background:#b8dcfb"></div>
<div style="left:811px;top:458px;width:13px;height:19px;background:#fff"></div>
<div style="left:41px;top:477px;width:25px;height:1px;background:#e0a548"></div>
<div style="left:66px;top:477px;width:322px;height:1px;background:#000"></div>
<div style="left:811px;top:477px;width:13px;height:1px;background:#000"></div>
<div style="left:389px;top:477px;width:21px;height:1px;background:#3c4a60"></div>
<div class="t" style="left:43.00px;top:461.50px;font-size:12.5px;line-height:normal;color:#222;font-weight:normal;font-family:'Liberation Sans',sans-serif;transform:scaleX(0.9828);transform-origin:0 0;">248</div>
<div class="t" style="left:276.25px;top:461.50px;font-size:12.5px;line-height:normal;color:#111;font-weight:normal;font-family:'Liberation Sans',sans-serif;transform:scaleX(1.0150);transform-origin:0 0;">07.05.2016</div>
<div style="left:228px;top:478px;width:160px;height:19px;background:#dce6f2"></div>
<div style="left:390px;top:478px;width:20px;height:19px;background:#9dc6f1"></div>
<div style="left:811px;top:478px;width:13px;height:19px;background:#dce6f2"></div>
<div style="left:41px;top:497px;width:25px;height:1px;background:#e0a548"></div>
<div style="left:66px;top:497px;width:322px;height:1px;background:#000"></div>
<div style="left:811px;top:497px;width:13px;height:1px;background:#000"></div>
<div style="left:389px;top:497px;width:21px;height:1px;background:#3c4a60"></div>
<div class="t" style="left:43.00px;top:481.50px;font-size:12.5px;line-height:normal;color:#222;font-weight:normal;font-family:'Liberation Sans',sans-serif;transform:scaleX(0.9828);transform-origin:0 0;">249</div>
<div class="t" style="left:276.25px;top:481.50px;font-size:12.5px;line-height:normal;color:#111;font-weight:normal;font-family:'Liberation Sans',sans-serif;transform:scaleX(1.0150);transform-origin:0 0;">07.05.2016</div>
<div style="left:228px;top:498px;width:160px;height:19px;background:#fff"></div>
<div style="left:390px;top:498px;width:20px;height:19px;background:#b8dcfb"></div>
<div style="left:811px;top:498px;width:13px;height:19px;background:#fff"></div>
<div style="left:41px;top:517px;width:25px;height:1px;background:#e0a548"></div>
<div style="left:66px;top:517px;width:322px;height:1px;background:#000"></div>
<div style="left:811px;top:517px;width:13px;height:1px;background:#000"></div>
<div style="left:389px;top:517px;width:21px;height:1px;background:#3c4a60"></div>
<div class="t" style="left:43.00px;top:501.50px;font-size:12.5px;line-height:normal;color:#222;font-weight:normal;font-family:'Liberation Sans',sans-serif;transform:scaleX(0.9828);transform-origin:0 0;">250</div>
<div class="t" style="left:276.25px;top:501.50px;font-size:12.5px;line-height:normal;color:#111;font-weight:normal;font-family:'Liberation Sans',sans-serif;transform:scaleX(1.0150);transform-origin:0 0;">07.05.2016</div>
<div style="left:228px;top:518px;width:160px;height:19px;background:#dce6f2"></div>
<div style="left:390px;top:518px;width:20px;height:19px;background:#9dc6f1"></div>
<div style="left:811px;top:518px;width:13px;height:19px;background:#dce6f2"></div>
<div style="left:41px;top:537px;width:25px;height:1px;background:#e0a548"></div>
<div style="left:66px;top:537px;width:322px;height:1px;background:#000"></div>
<div style="left:811px;top:537px;width:13px;height:1px;background:#000"></div>
<div style="left:389px;top:537px;width:21px;height:1px;background:#3c4a60"></div>
<div class="t" style="left:43.00px;top:521.50px;font-size:12.5px;line-height:normal;color:#222;font-weight:normal;font-family:'Liberation Sans',sans-serif;transform:scaleX(0.9828);transform-origin:0 0;">251</div>
<div class="t" style="left:276.25px;top:521.50px;font-size:12.5px;line-height:normal;color:#111;font-weight:normal;font-family:'Liberation Sans',sans-serif;transform:scaleX(1.0150);transform-origin:0 0;">07.05.2016</div>
<div style="left:228px;top:538px;width:160px;height:19px;background:#fff"></div>
<div style="left:390px;top:538px;width:20px;height:19px;background:#b8dcfb"></div>
<div style="left:811px;top:538px;width:13px;height:19px;background:#fff"></div>
<div style="left:41px;top:557px;width:25px;height:1px;background:#e0a548"></div>
<div style="left:66px;top:557px;width:322px;height:1px;background:#000"></div>
<div style="left:811px;top:557px;width:13px;height:1px;background:#000"></div>
<div style="left:389px;top:557px;width:21px;height:1px;background:#3c4a60"></div>
<div class="t" style="left:43.00px;top:541.50px;font-size:12.5px;line-height:normal;color:#222;font-weight:normal;font-family:'Liberation Sans',sans-serif;transform:scaleX(0.9828);transform-origin:0 0;">252</div>
<div class="t" style="left:276.25px;top:541.50px;font-size:12.5px;line-height:normal;color:#111;font-weight:normal;font-family:'Liberation Sans',sans-serif;transform:scaleX(1.0150);transform-origin:0 0;">07.05.2016</div>
<div style="left:228px;top:558px;width:160px;height:19px;background:#dce6f2"></div>
<div style="left:390px;top:558px;width:20px;height:19px;background:#9dc6f1"></div>
<div style="left:811px;top:558px;width:13px;height:19px;background:#dce6f2"></div>
<div style="left:41px;top:577px;width:25px;height:1px;background:#e0a548"></div>
<div style="left:66px;top:577px;width:322px;height:1px;background:#000"></div>
<div style="left:811px;top:577px;width:13px;height:1px;background:#000"></div>
<div style="left:389px;top:577px;width:21px;height:1px;background:#3c4a60"></div>
<div class="t" style="left:43.00px;top:561.50px;font-size:12.5px;line-height:normal;color:#222;font-weight:normal;font-family:'Liberation Sans',sans-serif;transform:scaleX(0.9828);transform-origin:0 0;">253</div>
<div class="t" style="left:276.25px;top:561.50px;font-size:12.5px;line-height:normal;color:#111;font-weight:normal;font-family:'Liberation Sans',sans-serif;transform:scaleX(1.0150);transform-origin:0 0;">07.05.2016</div>
<div style="left:228px;top:578px;width:160px;height:19px;background:#fff"></div>
<div style="left:390px;top:578px;width:20px;height:19px;background:#b8dcfb"></div>
<div style="left:811px;top:578px;width:13px;height:19px;background:#fff"></div>
<div style="left:41px;top:597px;width:25px;height:1px;background:#e0a548"></div>
<div style="left:66px;top:597px;width:322px;height:1px;background:#000"></div>
<div style="left:811px;top:597px;width:13px;height:1px;background:#000"></div>
<div style="left:389px;top:597px;width:21px;height:1px;background:#3c4a60"></div>
<div class="t" style="left:43.00px;top:581.50px;font-size:12.5px;line-height:normal;color:#222;font-weight:normal;font-family:'Liberation Sans',sans-serif;transform:scaleX(0.9828);transform-origin:0 0;">254</div>
<div class="t" style="left:276.25px;top:581.50px;font-size:12.5px;line-height:normal;color:#111;font-weight:normal;font-family:'Liberation Sans',sans-serif;transform:scaleX(1.0150);transform-origin:0 0;">07.05.2016</div>
<div style="left:67px;top:218px;width:160px;height:379px;background:#92d050"></div>
<div style="left:66px;top:237px;width:162px;height:1px;background:#000"></div>
<div style="left:66px;top:257px;width:162px;height:1px;background:#000"></div>
<div style="left:66px;top:277px;width:162px;height:1px;background:#000"></div>
<div style="left:66px;top:297px;width:162px;height:1px;background:#000"></div>
<div style="left:66px;top:317px;width:162px;height:1px;background:#000"></div>
<div style="left:66px;top:337px;width:162px;height:1px;background:#000"></div>
<div style="left:66px;top:357px;width:162px;height:1px;background:#000"></div>
<div style="left:66px;top:377px;width:162px;height:1px;background:#000"></div>
<div style="left:66px;top:397px;width:162px;height:1px;background:#000"></div>
<div style="left:66px;top:417px;width:162px;height:1px;background:#000"></div>
<div style="left:66px;top:437px;width:162px;height:1px;background:#000"></div>
<div style="left:66px;top:457px;width:162px;height:1px;background:#000"></div>
<div style="left:66px;top:477px;width:162px;height:1px;background:#000"></div>
<div style="left:66px;top:497px;width:162px;height:1px;background:#000"></div>
<div style="left:66px;top:517px;width:162px;height:1px;background:#000"></div>
<div style="left:66px;top:537px;width:162px;height:1px;background:#000"></div>
<div style="left:66px;top:557px;width:162px;height:1px;background:#000"></div>
<div style="left:66px;top:577px;width:162px;height:1px;background:#000"></div>
<div style="left:66px;top:597px;width:162px;height:1px;background:#000"></div>
<div style="left:227px;top:218px;width:1px;height:380px;background:#000"></div>
<div style="left:387px;top:218px;width:1px;height:380px;background:#000"></div>
<div style="left:389px;top:218px;width:1px;height:381px;background:#1a1a1a"></div>
<div style="left:389px;top:598px;width:21px;height:1px;background:#1a1a1a"></div>
<div class="t" style="left:69.00px;top:221.50px;font-size:12.5px;line-height:normal;color:#111;font-weight:normal;font-family:'Liberation Sans',sans-serif;transform:scaleX(1.0846);transform-origin:0 0;">Картофель</div>
<div class="t" style="left:69.00px;top:241.50px;font-size:12.5px;line-height:normal;color:#111;font-weight:normal;font-family:'Liberation Sans',sans-serif;transform:scaleX(1.0809);transform-origin:0 0;">Мясо</div>
<div class="t" style="left:69.00px;top:261.50px;font-size:12.5px;line-height:normal;color:#111;font-weight:normal;font-family:'Liberation Sans',sans-serif;transform:scaleX(1.0809);transform-origin:0 0;">Мясо</div>
<div class="t" style="left:69.00px;top:281.50px;font-size:12.5px;line-height:normal;color:#111;font-weight:normal;font-family:'Liberation Sans',sans-serif;transform:scaleX(1.0809);transform-origin:0 0;">Мясо</div>
<div class="t" style="left:69.00px;top:301.50px;font-size:12.5px;line-height:normal;color:#111;font-weight:normal;font-family:'Liberation Sans',sans-serif;transform:scaleX(1.0809);transform-origin:0 0;">Мясо</div>
<div class="t" style="left:69.00px;top:321.50px;font-size:12.5px;line-height:normal;color:#111;font-weight:normal;font-family:'Liberation Sans',sans-serif;transform:scaleX(1.0809);transform-origin:0 0;">Мясо</div>
<div class="t" style="left:69.00px;top:341.50px;font-size:12.5px;line-height:normal;color:#111;font-weight:normal;font-family:'Liberation Sans',sans-serif;transform:scaleX(1.0809);transform-origin:0 0;">Мясо</div>
<div class="t" style="left:69.00px;top:361.50px;font-size:12.5px;line-height:normal;color:#111;font-weight:normal;font-family:'Liberation Sans',sans-serif;transform:scaleX(1.0809);transform-origin:0 0;">Мясо</div>
<div class="t" style="left:69.00px;top:381.50px;font-size:12.5px;line-height:normal;color:#111;font-weight:normal;font-family:'Liberation Sans',sans-serif;transform:scaleX(1.0809);transform-origin:0 0;">Мясо</div>
<div class="t" style="left:69.00px;top:401.50px;font-size:12.5px;line-height:normal;color:#111;font-weight:normal;font-family:'Liberation Sans',sans-serif;transform:scaleX(1.0809);transform-origin:0 0;">Мясо</div>
<div class="t" style="left:69.00px;top:421.50px;font-size:12.5px;line-height:normal;color:#111;font-weight:normal;font-family:'Liberation Sans',sans-serif;transform:scaleX(1.0271);transform-origin:0 0;">Рыба</div>
<div class="t" style="left:69.00px;top:441.50px;font-size:12.5px;line-height:normal;color:#111;font-weight:normal;font-family:'Liberation Sans',sans-serif;transform:scaleX(1.0271);transform-origin:0 0;">Рыба</div>
<div class="t" style="left:69.00px;top:461.50px;font-size:12.5px;line-height:normal;color:#111;font-weight:normal;font-family:'Liberation Sans',sans-serif;transform:scaleX(1.0271);transform-origin:0 0;">Рыба</div>
<div class="t" style="left:69.00px;top:481.50px;font-size:12.5px;line-height:normal;color:#111;font-weight:normal;font-family:'Liberation Sans',sans-serif;transform:scaleX(1.0271);transform-origin:0 0;">Рыба</div>
<div class="t" style="left:69.00px;top:501.50px;font-size:12.5px;line-height:normal;color:#111;font-weight:normal;font-family:'Liberation Sans',sans-serif;transform:scaleX(1.0271);transform-origin:0 0;">Рыба</div>
<div class="t" style="left:69.00px;top:521.50px;font-size:12.5px;line-height:normal;color:#111;font-weight:normal;font-family:'Liberation Sans',sans-serif;transform:scaleX(1.0271);transform-origin:0 0;">Рыба</div>
<div class="t" style="left:69.00px;top:541.50px;font-size:12.5px;line-height:normal;color:#111;font-weight:normal;font-family:'Liberation Sans',sans-serif;transform:scaleX(1.0271);transform-origin:0 0;">Рыба</div>
<div class="t" style="left:69.00px;top:561.50px;font-size:12.5px;line-height:normal;color:#111;font-weight:normal;font-family:'Liberation Sans',sans-serif;transform:scaleX(1.0271);transform-origin:0 0;">Рыба</div>
<div class="t" style="left:69.00px;top:581.50px;font-size:12.5px;line-height:normal;color:#111;font-weight:normal;font-family:'Liberation Sans',sans-serif;transform:scaleX(1.0271);transform-origin:0 0;">Рыба</div>
<div class="t" style="left:43.50px;top:601.50px;font-size:12.5px;line-height:normal;color:#333;font-weight:normal;font-family:'Liberation Sans',sans-serif;transform:scaleX(0.9348);transform-origin:0 0;">255</div>
<div class="t" style="left:43.50px;top:621.50px;font-size:12.5px;line-height:normal;color:#333;font-weight:normal;font-family:'Liberation Sans',sans-serif;transform:scaleX(0.9348);transform-origin:0 0;">256</div>
<div style="left:41px;top:617px;width:25px;height:1px;background:#c0c6ce"></div>
<div style="left:67px;top:617px;width:757px;height:1px;background:#dadcdf"></div>
<div style="left:227px;top:598px;width:1px;height:28px;background:#dadcdf"></div>
<div style="left:389px;top:598px;width:1px;height:28px;background:#dadcdf"></div>
<div style="left:811px;top:598px;width:13px;height:28px;background:#fff"></div>
<div style="left:811px;top:617px;width:13px;height:1px;background:#dadcdf"></div>
<div style="left:824px;top:194px;width:17px;height:432px;background:linear-gradient(90deg,#e3e7ec,#eef1f4 50%,#e3e7ec);border-left:1px solid #c9d0d8"></div>
<div style="left:826px;top:198px;width:14px;height:8px;background:#fff;border:1px solid #8e97a3"></div>
<div style="left:829px;top:201px;width:8px;height:1px;background:#6a7280"></div>
<svg style="position:absolute;left:827px;top:212px;" width="10" height="5" viewBox="0 0 10 5"><path d="M0 5 L5 0 L10 5 Z" fill="#4a5260"/></svg>
<div style="left:825px;top:579px;width:14px;height:30px;background:linear-gradient(90deg,#f5f7fa,#e3e8ee);border:1px solid #97a2b0;border-radius:2px"></div>
<svg style="position:absolute;left:828px;top:589px;" width="8" height="10" viewBox="0 0 8 10"><path d="M0 1.5 H8 M0 3.5 H8 M0 5.5 H8 M0 7.5 H8" stroke="#8a94a2"/></svg>
<svg style="position:absolute;left:827px;top:615px;" width="10" height="5" viewBox="0 0 10 5"><path d="M0 0 L10 0 L5 5 Z" fill="#4a5260"/></svg>
<div style="left:40px;top:168px;width:1px;height:497px;background:#737d8a"></div>
<div style="left:840px;top:168px;width:1px;height:497px;background:#737d8a"></div>
<div style="left:41px;top:626px;width:799px;height:16px;background:linear-gradient(#e9ecf0,#dfe3e8)"></div>
<div style="left:41px;top:626px;width:63px;height:1px;background:#9ba5b2"></div>
<div style="left:103px;top:626px;width:1px;height:15px;background:#9ba5b2"></div>
<svg style="position:absolute;left:47px;top:630px;" width="6" height="7" viewBox="0 0 6 7"><rect x="0" y="0" width="1.5" height="7" fill="#3c4656"/><path d="M6 0 V7 L1.5 3.5 Z" fill="#3c4656"/></svg>
<svg style="position:absolute;left:63px;top:630px;" width="5" height="7" viewBox="0 0 5 7"><path d="M5 0 V7 L0 3.5 Z" fill="#3c4656"/></svg>
<svg style="position:absolute;left:77px;top:630px;" width="5" height="7" viewBox="0 0 5 7"><path d="M0 0 V7 L5 3.5 Z" fill="#3c4656"/></svg>
<svg style="position:absolute;left:91px;top:630px;" width="6" height="7" viewBox="0 0 6 7"><path d="M0 0 V7 L4.5 3.5 Z" fill="#3c4656"/><rect x="4.5" y="0" width="1.5" height="7" fill="#3c4656"/></svg>
<svg style="position:absolute;left:104px;top:626px;" width="316" height="17" viewBox="0 0 316 17"><defs><linearGradient id="tg" x1="0" y1="0" x2="0" y2="1"><stop offset="0" stop-color="#f1f3f6"/><stop offset="1" stop-color="#dde1e7"/></linearGradient></defs><path d="M0 0 L0 17 L140 17 L140 0 Z" fill="#fff"/><path d="M132 16 L145 0.5 L215 0.5 L215 16 Z" fill="url(#tg)"/><path d="M132 16.5 L145 0.5 L215 0.5" fill="none" stroke="#98a2af"/><path d="M201 16 L214 0.5 L285 0.5 L285 16 Z" fill="url(#tg)"/><path d="M201 16.5 L214 0.5 L285 0.5" fill="none" stroke="#98a2af"/><path d="M264 16 L277 0.5 L316 0.5 L316 16 Z" fill="url(#tg)"/><path d="M264 16.5 L277 0.5 L316 0.5" fill="none" stroke="#98a2af"/></svg>
<div class="t" style="left:113.50px;top:628.00px;font-size:12px;line-height:normal;color:#2a3550;font-weight:bold;font-family:'Liberation Sans',sans-serif;letter-spacing:0.479px;">Продукты питания</div>
<div class="t" style="left:253.00px;top:628.60px;font-size:11.5px;line-height:normal;color:#3a3a4a;font-weight:normal;font-family:'Liberation Sans',sans-serif;letter-spacing:0.058px;">Таблица</div>
<div class="t" style="left:319.00px;top:628.60px;font-size:11.5px;line-height:normal;color:#3a3a4a;font-weight:normal;font-family:'Liberation Sans',sans-serif;letter-spacing:0.239px;">Рассчет</div>
<div class="t" style="left:385.50px;top:628.60px;font-size:11.5px;line-height:normal;color:#3a3a4a;font-weight:normal;font-family:'Liberation Sans',sans-serif;letter-spacing:-0.156px;">Вывод</div>
<div style="left:816px;top:627px;width:8px;height:14px;background:#fff;border:1px solid #8e97a3"></div>
<div style="left:819px;top:630px;width:1px;height:8px;background:#6a7280"></div>
<div style="left:824px;top:626px;width:16px;height:16px;background:#e3e7ec"></div>
<div style="left:41px;top:642px;width:799px;height:22px;background:linear-gradient(#f0f2f5,#e3e6ea 40%,#d3d7dc 80%,#cbcfd5)"></div>
<div style="left:41px;top:642px;width:799px;height:1px;background:#858e99"></div>
<div style="left:41px;top:643px;width:799px;height:1px;background:#fafbfc"></div>
<div style="left:41px;top:664px;width:799px;height:1px;background:#6f7782"></div>
<div style="left:33px;top:665px;width:813px;height:4px;background:#b9d2eb"></div>
<div class="t" style="left:49.00px;top:646.50px;font-size:11px;line-height:normal;color:#3a2f4f;font-weight:normal;font-family:'Liberation Sans',sans-serif;letter-spacing:0.339px;">Готово</div>
<div style="left:95px;top:643px;width:1px;height:20px;background:#aab2bd"></div>
<div style="left:130px;top:643px;width:1px;height:20px;background:#aab2bd"></div>
<svg style="position:absolute;left:104px;top:646px;" width="16" height="13" viewBox="0 0 16 13"><rect x="3.5" y="1.5" width="12" height="11" fill="#fff" stroke="#3a6fc4"/><rect x="3.5" y="1.5" width="12" height="2.5" fill="#3a6fc4"/><path d="M5 6.5 H14 M5 9 H14 M9 4 V12" stroke="#8fb0e0"/><circle cx="4" cy="4" r="3.2" fill="#e08a3a" stroke="#a0501a" stroke-width=".6"/></svg>
<div class="t" style="left:316.50px;top:647.10px;font-size:11px;line-height:normal;color:#3a2f4f;font-weight:normal;font-family:'Liberation Sans',sans-serif;letter-spacing:-0.137px;">Среднее: 123</div>
<div class="t" style="left:401.50px;top:647.10px;font-size:11px;line-height:normal;color:#3a2f4f;font-weight:normal;font-family:'Liberation Sans',sans-serif;letter-spacing:0.097px;">Количество: 253</div>
<div class="t" style="left:503.50px;top:647.10px;font-size:11px;line-height:normal;color:#3a2f4f;font-weight:normal;font-family:'Liberation Sans',sans-serif;letter-spacing:-0.272px;">Сумма: 31090</div>
<div style="left:583px;top:643px;width:1px;height:20px;background:#aab2bd"></div>
<div style="left:588px;top:642px;width:20px;height:20px;background:linear-gradient(#fde9a0,#fbd46a);border:1px solid #e2a947;border-radius:3px"></div>
<svg style="position:absolute;left:591px;top:648px;" width="14" height="8" viewBox="0 0 14 8"><rect x="0.5" y="0.5" width="13" height="7" fill="#3c4a60"/><rect x="2" y="2" width="3" height="3" fill="#fff"/><rect x="5.8" y="2" width="3" height="3" fill="#fff"/><rect x="9.5" y="2" width="3" height="3" fill="#fff"/></svg>
<svg style="position:absolute;left:609px;top:646px;" width="14" height="12" viewBox="0 0 14 12"><rect x="0.5" y="0.5" width="13" height="11" fill="#fff" stroke="#555d68"/><rect x="3" y="2.5" width="8" height="5" fill="#e9edf2" stroke="#8a929c"/></svg>
<svg style="position:absolute;left:628px;top:646px;" width="14" height="12" viewBox="0 0 14 12"><rect x="0.5" y="0.5" width="13" height="11" fill="#e3e6ea" stroke="#555d68"/><rect x="2" y="3" width="10" height="6" fill="#9aa2ac"/></svg>
<div class="t" style="left:654.00px;top:647.10px;font-size:11px;line-height:normal;color:#2a3a80;font-weight:normal;font-family:'Liberation Sans',sans-serif;letter-spacing:-0.160px;">100%</div>
<svg style="position:absolute;left:689px;top:643px;" width="17" height="17" viewBox="0 0 17 17"><circle cx="8.5" cy="8.5" r="7.5" fill="#f3f4f6" stroke="#9aa2ac"/></svg>
<svg style="position:absolute;left:750px;top:652px;" width="12" height="7" viewBox="0 0 12 7"><path d="M0.5 0.5 L6 6 L11.5 0.5 Z" fill="#f6f7f9" stroke="#8f97a2"/></svg>
<svg style="position:absolute;left:805px;top:644px;" width="17" height="17" viewBox="0 0 17 17"><circle cx="8.5" cy="8.5" r="7.5" fill="#f3f4f6" stroke="#9aa2ac"/><path d="M4.5 8.5 H12.5 M8.5 4.5 V12.5" stroke="#333" stroke-width="1.6"/></svg>
<svg style="position:absolute;left:829px;top:651px;" width="10" height="12" viewBox="0 0 10 12"><g fill="#b9c1cb"><rect x="7" y="1" width="2" height="2"/><rect x="4" y="4" width="2" height="2"/><rect x="7" y="4" width="2" height="2"/><rect x="1" y="7" width="2" height="2"/><rect x="4" y="7" width="2" height="2"/><rect x="7" y="7" width="2" height="2"/></g></svg>
<div style="left:409px;top:93px;width:403px;height:560px;background:#fff;border:1px solid #9aa0a8;box-shadow:2px 2px 3px rgba(0,0,0,0.18)"></div>
<div style="left:411px;top:95px;width:399px;height:22px;background:#f2f3f5;border-bottom:1px solid #dadde2"></div>
<div class="t" style="left:418.50px;top:100.00px;font-size:11px;line-height:normal;color:#222;font-weight:bold;font-family:'Liberation Sans',sans-serif;letter-spacing:-0.138px;">Настройка строки состояния</div>
<div style="left:435px;top:118px;width:1px;height:534px;background:#e2e4e8"></div>
<div style="left:436px;top:118px;width:1px;height:534px;background:#fff"></div>
<div style="left:413px;top:119px;width:20px;height:20px;background:#fdf1c6;border:1px solid #eea24e;border-radius:3px"></div>
<svg style="position:absolute;left:418px;top:122px;" width="10" height="12" viewBox="0 0 10 12"><path d="M1.6 6.8 L3.4 10.8 L8.6 0.8" fill="none" stroke="#2c55b8" stroke-width="1.55" stroke-linejoin="round"/></svg>
<div class="t" style="left:444.50px;top:123.00px;font-size:11px;line-height:normal;color:#2a2030;font-weight:normal;font-family:'Liberation Sans',sans-serif;letter-spacing:0.447px;"><u>Р</u>ежим ячейки</div>
<div class="t" style="left:771.58px;top:123.00px;font-size:11px;line-height:normal;color:#2a2030;font-weight:normal;font-family:'Liberation Sans',sans-serif;letter-spacing:0.422px;">Готово</div>
<svg style="position:absolute;left:443px;top:141px;" width="366" height="1" viewBox="0 0 366 1"><path d="M0 0.5 H366" stroke="#c2c4c8" stroke-dasharray="2 2"/></svg>
<div style="left:413px;top:145px;width:20px;height:20px;background:#fdf1c6;border:1px solid #eea24e;border-radius:3px"></div>
<svg style="position:absolute;left:418px;top:148px;" width="10" height="12" viewBox="0 0 10 12"><path d="M1.6 6.8 L3.4 10.8 L8.6 0.8" fill="none" stroke="#2c55b8" stroke-width="1.55" stroke-linejoin="round"/></svg>
<div class="t" style="left:444.50px;top:149.00px;font-size:11px;line-height:normal;color:#2a2030;font-weight:normal;font-family:'Liberation Sans',sans-serif;letter-spacing:0.292px;"><u>П</u>одписи</div>
<div class="t" style="left:754.22px;top:149.00px;font-size:11px;line-height:normal;color:#2a2030;font-weight:normal;font-family:'Liberation Sans',sans-serif;letter-spacing:0.376px;">Отключен</div>
<div style="left:413px;top:167px;width:20px;height:20px;background:#fdf1c6;border:1px solid #eea24e;border-radius:3px"></div>
<svg style="position:absolute;left:418px;top:170px;" width="10" height="12" viewBox="0 0 10 12"><path d="M1.6 6.8 L3.4 10.8 L8.6 0.8" fill="none" stroke="#2c55b8" stroke-width="1.55" stroke-linejoin="round"/></svg>
<div class="t" style="left:444.50px;top:171.00px;font-size:11px;line-height:normal;color:#2a2030;font-weight:normal;font-family:'Liberation Sans',sans-serif;letter-spacing:0.302px;"><u>П</u>олитика управления данными</div>
<div class="t" style="left:754.22px;top:171.00px;font-size:11px;line-height:normal;color:#2a2030;font-weight:normal;font-family:'Liberation Sans',sans-serif;letter-spacing:0.376px;">Отключен</div>
<div style="left:413px;top:189px;width:20px;height:20px;background:#fdf1c6;border:1px solid #eea24e;border-radius:3px"></div>
<svg style="position:absolute;left:418px;top:192px;" width="10" height="12" viewBox="0 0 10 12"><path d="M1.6 6.8 L3.4 10.8 L8.6 0.8" fill="none" stroke="#2c55b8" stroke-width="1.55" stroke-linejoin="round"/></svg>
<div class="t" style="left:444.50px;top:193.00px;font-size:11px;line-height:normal;color:#2a2030;font-weight:normal;font-family:'Liberation Sans',sans-serif;letter-spacing:0.087px;"><u>Р</u>азрешения</div>
<div class="t" style="left:754.22px;top:193.00px;font-size:11px;line-height:normal;color:#2a2030;font-weight:normal;font-family:'Liberation Sans',sans-serif;letter-spacing:0.376px;">Отключен</div>
<svg style="position:absolute;left:443px;top:211px;" width="366" height="1" viewBox="0 0 366 1"><path d="M0 0.5 H366" stroke="#c2c4c8" stroke-dasharray="2 2"/></svg>
<div class="t" style="left:444.50px;top:219.00px;font-size:11px;line-height:normal;color:#2a2030;font-weight:normal;font-family:'Liberation Sans',sans-serif;letter-spacing:-0.165px;">Caps Loc<u>k</u></div>
<div class="t" style="left:754.22px;top:219.00px;font-size:11px;line-height:normal;color:#2a2030;font-weight:normal;font-family:'Liberation Sans',sans-serif;letter-spacing:0.376px;">Отключен</div>
<div class="t" style="left:444.50px;top:241.00px;font-size:11px;line-height:normal;color:#2a2030;font-weight:normal;font-family:'Liberation Sans',sans-serif;letter-spacing:-0.035px;"><u>N</u>um Lock</div>
<div class="t" style="left:760.82px;top:241.00px;font-size:11px;line-height:normal;color:#2a2030;font-weight:normal;font-family:'Liberation Sans',sans-serif;letter-spacing:0.382px;">Включен</div>
<div style="left:413px;top:259px;width:20px;height:20px;background:#fdf1c6;border:1px solid #eea24e;border-radius:3px"></div>
<svg style="position:absolute;left:418px;top:262px;" width="10" height="12" viewBox="0 0 10 12"><path d="M1.6 6.8 L3.4 10.8 L8.6 0.8" fill="none" stroke="#2c55b8" stroke-width="1.55" stroke-linejoin="round"/></svg>
<div class="t" style="left:444.50px;top:263.00px;font-size:11px;line-height:normal;color:#2a2030;font-weight:normal;font-family:'Liberation Sans',sans-serif;letter-spacing:-0.027px;">Sc<u>r</u>oll Lock</div>
<div class="t" style="left:754.22px;top:263.00px;font-size:11px;line-height:normal;color:#2a2030;font-weight:normal;font-family:'Liberation Sans',sans-serif;letter-spacing:0.376px;">Отключен</div>
<div style="left:413px;top:281px;width:20px;height:20px;background:#fdf1c6;border:1px solid #eea24e;border-radius:3px"></div>
<svg style="position:absolute;left:418px;top:284px;" width="10" height="12" viewBox="0 0 10 12"><path d="M1.6 6.8 L3.4 10.8 L8.6 0.8" fill="none" stroke="#2c55b8" stroke-width="1.55" stroke-linejoin="round"/></svg>
<div class="t" style="left:444.50px;top:285.00px;font-size:11px;line-height:normal;color:#2a2030;font-weight:normal;font-family:'Liberation Sans',sans-serif;letter-spacing:0.314px;"><u>Ф</u>иксированный десятичный формат</div>
<div class="t" style="left:754.22px;top:285.00px;font-size:11px;line-height:normal;color:#2a2030;font-weight:normal;font-family:'Liberation Sans',sans-serif;letter-spacing:0.376px;">Отключен</div>
<div class="t" style="left:444.50px;top:307.00px;font-size:11px;line-height:normal;color:#2a2030;font-weight:normal;font-family:'Liberation Sans',sans-serif;letter-spacing:0.184px;"><u>Р</u>ежим замены</div>
<div style="left:413px;top:325px;width:20px;height:20px;background:#fdf1c6;border:1px solid #eea24e;border-radius:3px"></div>
<svg style="position:absolute;left:418px;top:328px;" width="10" height="12" viewBox="0 0 10 12"><path d="M1.6 6.8 L3.4 10.8 L8.6 0.8" fill="none" stroke="#2c55b8" stroke-width="1.55" stroke-linejoin="round"/></svg>
<div class="t" style="left:444.50px;top:329.00px;font-size:11px;line-height:normal;color:#2a2030;font-weight:normal;font-family:'Liberation Sans',sans-serif;letter-spacing:0.287px;"><u>Р</u>ежим перехода  в конец</div>
<div style="left:413px;top:347px;width:20px;height:20px;background:#fdf1c6;border:1px solid #eea24e;border-radius:3px"></div>
<svg style="position:absolute;left:418px;top:350px;" width="10" height="12" viewBox="0 0 10 12"><path d="M1.6 6.8 L3.4 10.8 L8.6 0.8" fill="none" stroke="#2c55b8" stroke-width="1.55" stroke-linejoin="round"/></svg>
<div class="t" style="left:444.50px;top:351.00px;font-size:11px;line-height:normal;color:#2a2030;font-weight:normal;font-family:'Liberation Sans',sans-serif;letter-spacing:0.196px;"><u>З</u>апись макроса</div>
<div class="t" style="left:750.70px;top:351.00px;font-size:11px;line-height:normal;color:#2a2030;font-weight:normal;font-family:'Liberation Sans',sans-serif;letter-spacing:0.100px;">Нет записи</div>
<svg style="position:absolute;left:443px;top:369px;" width="366" height="1" viewBox="0 0 366 1"><path d="M0 0.5 H366" stroke="#c2c4c8" stroke-dasharray="2 2"/></svg>
<div style="left:413px;top:373px;width:20px;height:20px;background:#fdf1c6;border:1px solid #eea24e;border-radius:3px"></div>
<svg style="position:absolute;left:418px;top:376px;" width="10" height="12" viewBox="0 0 10 12"><path d="M1.6 6.8 L3.4 10.8 L8.6 0.8" fill="none" stroke="#2c55b8" stroke-width="1.55" stroke-linejoin="round"/></svg>
<div class="t" style="left:444.50px;top:377.00px;font-size:11px;line-height:normal;color:#2a2030;font-weight:normal;font-family:'Liberation Sans',sans-serif;letter-spacing:0.159px;"><u>Р</u>ежим выделения</div>
<svg style="position:absolute;left:443px;top:395px;" width="366" height="1" viewBox="0 0 366 1"><path d="M0 0.5 H366" stroke="#c2c4c8" stroke-dasharray="2 2"/></svg>
<div style="left:413px;top:399px;width:20px;height:20px;background:#fdf1c6;border:1px solid #eea24e;border-radius:3px"></div>
<svg style="position:absolute;left:418px;top:402px;" width="10" height="12" viewBox="0 0 10 12"><path d="M1.6 6.8 L3.4 10.8 L8.6 0.8" fill="none" stroke="#2c55b8" stroke-width="1.55" stroke-linejoin="round"/></svg>
<div class="t" style="left:444.50px;top:403.00px;font-size:11px;line-height:normal;color:#2a2030;font-weight:normal;font-family:'Liberation Sans',sans-serif;letter-spacing:0.312px;"><u>Н</u>омер страницы</div>
<svg style="position:absolute;left:443px;top:421px;" width="366" height="1" viewBox="0 0 366 1"><path d="M0 0.5 H366" stroke="#c2c4c8" stroke-dasharray="2 2"/></svg>
<div style="left:413px;top:425px;width:20px;height:20px;background:#fdf1c6;border:1px solid #eea24e;border-radius:3px"></div>
<svg style="position:absolute;left:418px;top:428px;" width="10" height="12" viewBox="0 0 10 12"><path d="M1.6 6.8 L3.4 10.8 L8.6 0.8" fill="none" stroke="#2c55b8" stroke-width="1.55" stroke-linejoin="round"/></svg>
<div class="t" style="left:444.50px;top:429.00px;font-size:11px;line-height:normal;color:#2a2030;font-weight:normal;font-family:'Liberation Sans',sans-serif;letter-spacing:-0.025px;"><u>С</u>реднее</div>
<div class="t" style="left:790.95px;top:429.00px;font-size:11px;line-height:normal;color:#2a2030;font-weight:normal;font-family:'Liberation Sans',sans-serif;letter-spacing:-0.203px;">123</div>
<div style="left:413px;top:452px;width:397px;height:22px;display:none"></div>
<div style="left:413px;top:446px;width:398px;height:22px;background:linear-gradient(#fde7a2,#fde8a6 45%,#fff0c2 60%,#fff6d8);border:1px solid #efc36a;border-radius:2px"></div>
<div style="left:413px;top:447px;width:20px;height:20px;background:#fdf1c6;border:1px solid #eea24e;border-radius:3px"></div>
<svg style="position:absolute;left:418px;top:450px;" width="10" height="12" viewBox="0 0 10 12"><path d="M1.6 6.8 L3.4 10.8 L8.6 0.8" fill="none" stroke="#2c55b8" stroke-width="1.55" stroke-linejoin="round"/></svg>
<div class="t" style="left:444.50px;top:451.00px;font-size:11px;line-height:normal;color:#2a2030;font-weight:normal;font-family:'Liberation Sans',sans-serif;letter-spacing:0.192px;"><u>К</u>оличество</div>
<div class="t" style="left:791.62px;top:451.00px;font-size:11px;line-height:normal;color:#2a2030;font-weight:normal;font-family:'Liberation Sans',sans-serif;letter-spacing:-0.370px;">253</div>
<div class="t" style="left:444.50px;top:473.00px;font-size:11px;line-height:normal;color:#2a2030;font-weight:normal;font-family:'Liberation Sans',sans-serif;letter-spacing:0.191px;"><u>К</u>оличество чисел</div>
<div class="t" style="left:444.50px;top:495.00px;font-size:11px;line-height:normal;color:#2a2030;font-weight:normal;font-family:'Liberation Sans',sans-serif;letter-spacing:0.442px;">М<u>и</u>нимум</div>
<div class="t" style="left:444.50px;top:517.00px;font-size:11px;line-height:normal;color:#2a2030;font-weight:normal;font-family:'Liberation Sans',sans-serif;letter-spacing:0.203px;">М<u>а</u>ксимум</div>
<div style="left:413px;top:535px;width:20px;height:20px;background:#fdf1c6;border:1px solid #eea24e;border-radius:3px"></div>
<svg style="position:absolute;left:418px;top:538px;" width="10" height="12" viewBox="0 0 10 12"><path d="M1.6 6.8 L3.4 10.8 L8.6 0.8" fill="none" stroke="#2c55b8" stroke-width="1.55" stroke-linejoin="round"/></svg>
<div class="t" style="left:444.50px;top:539.00px;font-size:11px;line-height:normal;color:#2a2030;font-weight:normal;font-family:'Liberation Sans',sans-serif;letter-spacing:-0.316px;"><u>С</u>умма</div>
<div class="t" style="left:778.92px;top:539.00px;font-size:11px;line-height:normal;color:#2a2030;font-weight:normal;font-family:'Liberation Sans',sans-serif;letter-spacing:-0.169px;">31090</div>
<svg style="position:absolute;left:443px;top:557px;" width="366" height="1" viewBox="0 0 366 1"><path d="M0 0.5 H366" stroke="#c2c4c8" stroke-dasharray="2 2"/></svg>
<div style="left:413px;top:561px;width:20px;height:20px;background:#fdf1c6;border:1px solid #eea24e;border-radius:3px"></div>
<svg style="position:absolute;left:418px;top:564px;" width="10" height="12" viewBox="0 0 10 12"><path d="M1.6 6.8 L3.4 10.8 L8.6 0.8" fill="none" stroke="#2c55b8" stroke-width="1.55" stroke-linejoin="round"/></svg>
<div class="t" style="left:444.50px;top:565.00px;font-size:11px;line-height:normal;color:#2a2030;font-weight:normal;font-family:'Liberation Sans',sans-serif;letter-spacing:0.369px;"><u>С</u>остояние отправки</div>
<svg style="position:absolute;left:443px;top:583px;" width="366" height="1" viewBox="0 0 366 1"><path d="M0 0.5 H366" stroke="#c2c4c8" stroke-dasharray="2 2"/></svg>
<div style="left:413px;top:587px;width:20px;height:20px;background:#fdf1c6;border:1px solid #eea24e;border-radius:3px"></div>
<svg style="position:absolute;left:418px;top:590px;" width="10" height="12" viewBox="0 0 10 12"><path d="M1.6 6.8 L3.4 10.8 L8.6 0.8" fill="none" stroke="#2c55b8" stroke-width="1.55" stroke-linejoin="round"/></svg>
<div class="t" style="left:444.50px;top:591.00px;font-size:11px;line-height:normal;color:#2a2030;font-weight:normal;font-family:'Liberation Sans',sans-serif;letter-spacing:0.432px;"><u>Я</u>рлыки режимов просмотра</div>
<div style="left:413px;top:609px;width:20px;height:20px;background:#fdf1c6;border:1px solid #eea24e;border-radius:3px"></div>
<svg style="position:absolute;left:418px;top:612px;" width="10" height="12" viewBox="0 0 10 12"><path d="M1.6 6.8 L3.4 10.8 L8.6 0.8" fill="none" stroke="#2c55b8" stroke-width="1.55" stroke-linejoin="round"/></svg>
<div class="t" style="left:444.50px;top:613.00px;font-size:11px;line-height:normal;color:#2a2030;font-weight:normal;font-family:'Liberation Sans',sans-serif;letter-spacing:0.027px;">Мас<u>ш</u>таб</div>
<div class="t" style="left:782.04px;top:613.00px;font-size:11px;line-height:normal;color:#2a2030;font-weight:normal;font-family:'Liberation Sans',sans-serif;letter-spacing:-0.335px;">100%</div>
<div style="left:413px;top:631px;width:20px;height:20px;background:#fdf1c6;border:1px solid #eea24e;border-radius:3px"></div>
<svg style="position:absolute;left:418px;top:634px;" width="10" height="12" viewBox="0 0 10 12"><path d="M1.6 6.8 L3.4 10.8 L8.6 0.8" fill="none" stroke="#2c55b8" stroke-width="1.55" stroke-linejoin="round"/></svg>
<div class="t" style="left:444.50px;top:635.00px;font-size:11px;line-height:normal;color:#2a2030;font-weight:normal;font-family:'Liberation Sans',sans-serif;letter-spacing:0.183px;"><u>П</u>олзунок масштаба</div>
<div style="left:408px;top:435px;width:245px;height:42px;border:5.5px solid #ff0000;border-radius:12px;box-shadow:2px 4px 4px rgba(40,40,50,0.5), inset 2px 4px 3px rgba(40,40,50,0.45)"></div>
</body></html>
